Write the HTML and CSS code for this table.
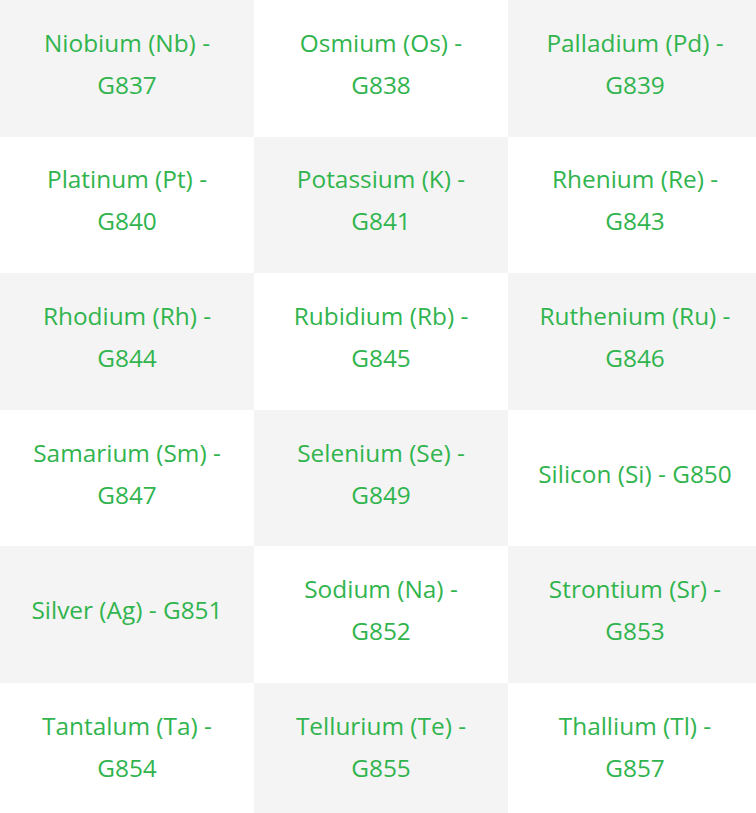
FILE: index.html
```html
<!DOCTYPE html>
<html lang="en">
<head>
<meta charset="utf-8">
<title>Elements</title>
<link rel="stylesheet" href="styles.css">
</head>
<body>
<div class="viewport">
  <div class="grid">
    <div class="cell shade">Niobium (Nb) - G837</div>
    <div class="cell">Osmium (Os) - G838</div>
    <div class="cell shade">Palladium (Pd) - G839</div>
    <div class="cell">Platinum (Pt) - G840</div>
    <div class="cell shade">Potassium (K) - G841</div>
    <div class="cell">Rhenium (Re) - G843</div>
    <div class="cell shade">Rhodium (Rh) - G844</div>
    <div class="cell">Rubidium (Rb) - G845</div>
    <div class="cell shade">Ruthenium (Ru) - G846</div>
    <div class="cell">Samarium (Sm) - G847</div>
    <div class="cell shade">Selenium (Se) - G849</div>
    <div class="cell">Silicon (Si) - G850</div>
    <div class="cell shade">Silver (Ag) - G851</div>
    <div class="cell">Sodium (Na) - G852</div>
    <div class="cell shade">Strontium (Sr) - G853</div>
    <div class="cell">Tantalum (Ta) - G854</div>
    <div class="cell shade">Tellurium (Te) - G855</div>
    <div class="cell">Thallium (Tl) - G857</div>
  </div>
</div>
</body>
</html>
```

FILE: styles.css
```css
html, body {
  margin: 0;
  padding: 0;
  background: #ffffff;
}
.viewport {
  width: 756px;
  overflow: hidden;
}
.grid {
  width: 762px;
  display: grid;
  grid-template-columns: repeat(3, 254px);
  grid-auto-rows: 136.6px;
}
.cell {
  display: flex;
  align-items: center;
  justify-content: center;
  text-align: center;
  padding: 0 24px 9px;
  font-family: "Open Sans", "Noto Sans", sans-serif;
  font-size: 24.4px;
  line-height: 42px;
  color: #31b44e;
  background: #ffffff;
}
.shade {
  background: #f4f4f4;
}
```
